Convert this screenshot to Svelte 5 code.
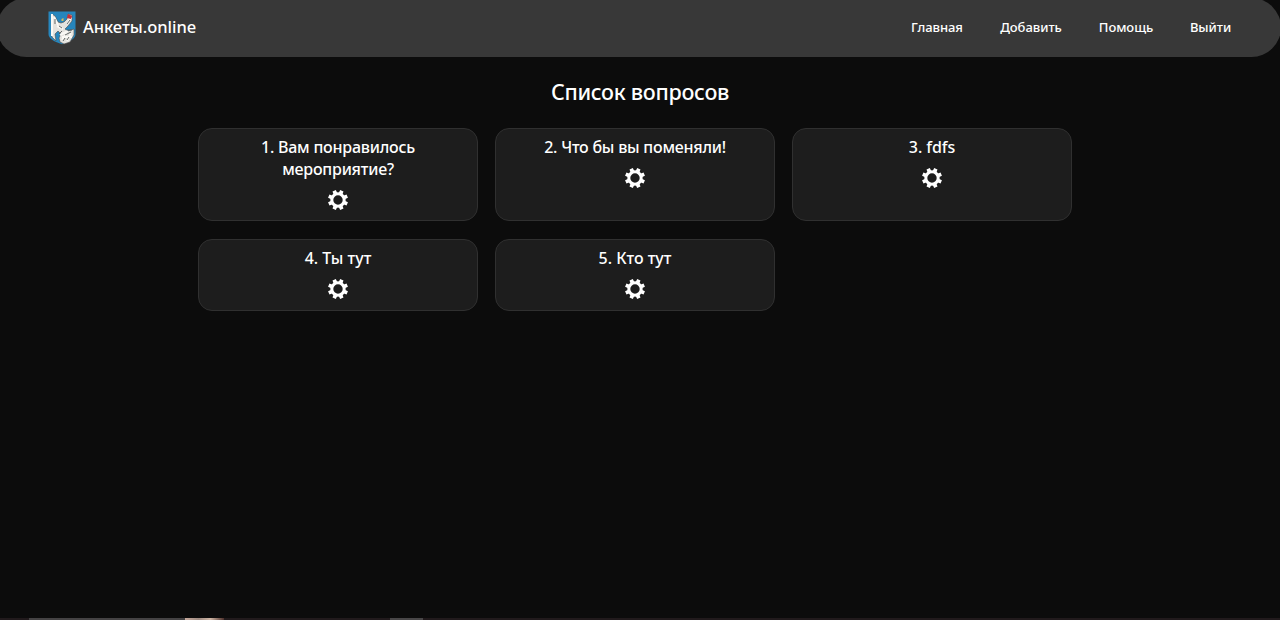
<script>
  const links = [
    { text: 'Главная', width: 52 },
    { text: 'Добавить', width: 63 },
    { text: 'Помощь', width: 54 },
    { text: 'Выйти', width: 42 }
  ];
  const questions = [
    { text: 'Вам понравилось мероприятие?', spacing: -0.22 },
    { text: 'Что бы вы поменяли!', spacing: -0.24 },
    { text: 'fdfs', spacing: -0.05 },
    { text: 'Ты тут', spacing: 0 },
    { text: 'Кто тут', spacing: 0 }
  ];
  const teeth = [22.5, 67.5, 112.5, 157.5];
</script>

<div class="page">
  <header>
    <a class="brand" href="#home">
      <svg class="crest" width="28" height="34" viewBox="0 0 28 34" aria-hidden="true">
        <path d="M.5.5h27V23c0 5-6 7.500-13.500 10.300C6.500 30.500.5 28 .5 23Z" fill="#2686bd" />
        <path d="M4 3l3 2 3 6 3 1 3-1 3-3 1-5 4 1v6l-4 5-3 3 3 2 6-2v6l-4 7-6 2-4-2-1-4 2-4-3-3-3 3 1 7-4-4Z" fill="#e4e3df" stroke="#4a4a49" stroke-width=".6" />
        <path d="M4 3v22M6 6l4 8M9 15l6 3M12 24l8-4M14 29l5-7M19 30l4-8M19 13l4-6M14 26l10 0" fill="none" stroke="#faf9f5" stroke-width="2" />
        <path d="M7 8v5M11 15l3 2M14 20l-3 3M17 24l6-3M17 27l-2 3M21 26l-2 3M22 9l-3 4M19 19l5 0" fill="none" stroke="#555958" stroke-width=".9" />
        <path d="M20 3l4 2-1 3-4-1Z" fill="#c62f36" />
        <path d="M13.500 8l2-1v3h-2Z" fill="#d9b95b" />
      </svg>
      <span>Анкеты.online</span>
    </a>
    <nav>
      {#each links as link}
        <a href="#menu" style:width="{link.width}px">{link.text}</a>
      {/each}
    </nav>
  </header>
  <main>
    <h1>Список вопросов</h1>
    <section>
      {#each questions as question, i}
        <article>
          <h2 style:letter-spacing="{question.spacing}px">{i + 1}. {question.text}</h2>
          <svg class="gear" width="20" height="20" viewBox="-10 -10 20 20" aria-hidden="true">
            <circle r="6.200" fill="none" stroke="#fff" stroke-width="3" />
            {#each teeth as angle}
              <g transform="rotate({angle})" fill="#fff">
                <path d="M-2-6.500L-1.800-10H1.800L2-6.500ZM-2 6.500L-1.800 10H1.800L2 6.500Z" />
              </g>
            {/each}
          </svg>
        </article>
      {/each}
    </section>
  </main>
  <footer><i class="line"></i><i class="thumb"></i><i class="tab"></i></footer>
</div>

<style>
  :global(body) { margin: 0; background: #0c0c0c; }
  .page {
    box-sizing: border-box;
    width: 1280px;
    height: 620px;
    overflow: hidden;
    display: flex;
    flex-direction: column;
    color: #fff;
    background: #0c0c0c;
    font-family: "Noto Sans", "Open Sans", sans-serif;
    font-weight: 500;
  }
  header {
    box-sizing: border-box;
    flex: none;
    height: 59px;
    margin: -2px -1px 0 -3px;
    padding: 0 49.500px 0 51px;
    border-radius: 30px;
    background: #383838;
    display: flex;
    align-items: center;
    justify-content: space-between;
  }
  a { color: inherit; text-decoration: none; white-space: nowrap; }
  .brand { display: flex; align-items: center; gap: 7px; font-size: 16.500px; letter-spacing: -.03px; }
  .brand span { padding-bottom: 2px; }
  .crest { display: block; }
  nav { display: flex; gap: 36.500px; padding-bottom: 2px; font-size: 13px; letter-spacing: -.05px; }
  nav a { display: flex; justify-content: center; }
  main { flex: 1; padding-top: 20px; }
  h1 {
    margin: 0;
    text-align: center;
    font-size: 21.500px;
    line-height: 30px;
    font-weight: 500;
    letter-spacing: -.28px;
  }
  section {
    width: 874px;
    margin: 21px 0 0 198px;
    display: grid;
    grid-template-columns: repeat(3, 280px);
    gap: 18px 17px;
  }
  article {
    box-sizing: border-box;
    min-height: 72px;
    padding: 7px 40px 10px;
    border: 1px solid #303030;
    border-radius: 14px;
    background: #1d1d1d;
    display: flex;
    flex-direction: column;
    align-items: center;
    gap: 10px;
  }
  h2 { margin: 0; text-align: center; font-size: 16px; line-height: 22px; font-weight: 500; }
  .gear { display: block; flex: none; }
  footer { height: 2px; flex: none; display: flex; background: #211a1c; }
  .line { width: 156px; margin-left: 29px; background: #454344; }
  .thumb { width: 39px; background: linear-gradient(90deg, #c8aa9d, #a08c83 35%, #d1b7a6 65%, #4d302b); }
  .tab { width: 33px; margin-left: 166px; background: #494748; }
</style>
